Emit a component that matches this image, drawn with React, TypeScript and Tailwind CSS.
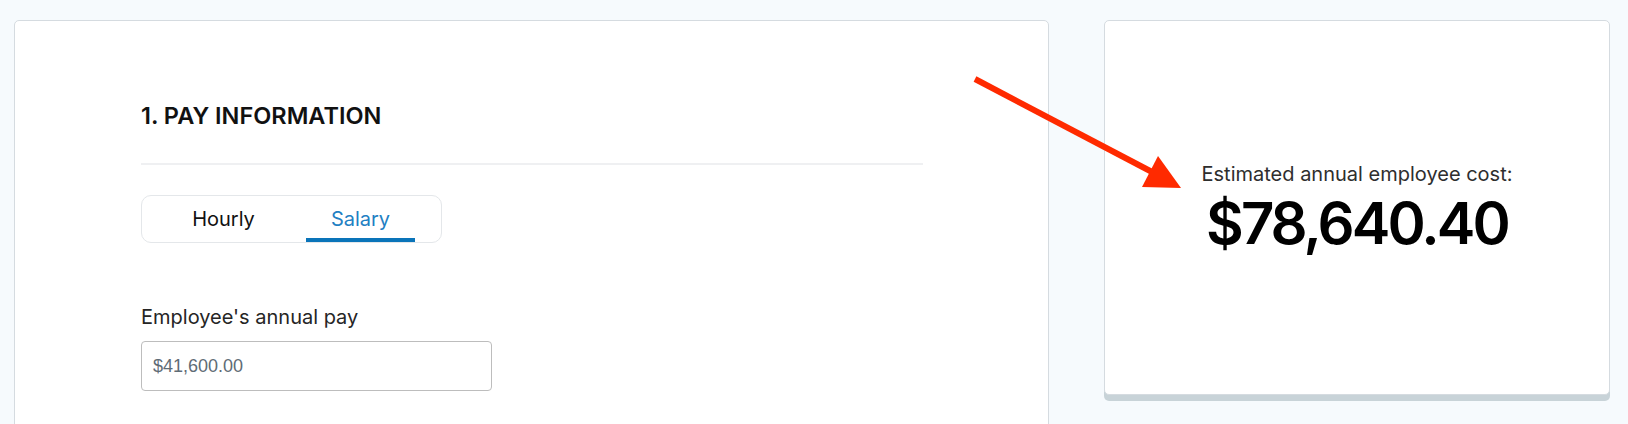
import React from 'react';

const font = { fontFamily: 'Inter, "Noto Sans", sans-serif' };

function PayToggle() {
    return (
        <div className="inline-flex h-[48px] items-stretch gap-[28px] rounded-[10px] border border-[#e4e7ea] bg-white pl-[27px] pr-[26px]">
            <div className="flex w-[109px] items-center justify-center border-b-4 border-transparent pt-1 text-[20px] text-[#111]">
                Hourly
            </div>
            <div className="flex w-[109px] items-center justify-center border-b-4 border-[#0a74b9] pt-1 text-[20px] text-[#1f80c3]">
                Salary
            </div>
        </div>
    );
}

export default function App() {
    return (
        <div className="relative min-h-screen overflow-hidden bg-[#f6fafd]" style={font}>
            <div className="flex items-start gap-[55px] pl-[14px] pt-5">
                {/* Pay information card */}
                <section className="h-[440px] w-[1035px] shrink-0 rounded-[5px] border border-[#d5dbe0] bg-white pl-[126px] pt-[80px]">
                    <h2 className="text-[23.5px] font-semibold leading-[30px] text-[#111]">1. PAY INFORMATION</h2>
                    <div className="mt-[32px] w-[782px] border-t-2 border-[#eff0f2]" />
                    <div className="mt-[30px]">
                        <PayToggle />
                    </div>
                    <label className="mt-[62px] block text-[20px] leading-[24px] text-[#252525]">
                        Employee's annual pay
                    </label>
                    <div
                        className="mt-[12px] flex h-[50px] w-[351px] items-center rounded-[4px] border border-[#bdbdbd] pl-[11px] text-[18px] text-[#5f6c76]"
                        style={{ fontFamily: '"Liberation Sans", Arial, sans-serif' }}
                    >
                        $41,600.00
                    </div>
                </section>

                {/* Result card */}
                <section className="flex h-[375px] w-[506px] shrink-0 flex-col items-center justify-center rounded-[5px] border border-[#d5dbe0] bg-white shadow-[0_6px_0_#c8d3d8]">
                    <p className="text-[20px] leading-[23px] text-[#2e2e2e]">Estimated annual employee cost:</p>
                    <p className="mt-[8px] text-[58px] font-semibold leading-[58px] tracking-[-0.05em] text-black">$78,640.40</p>
                </section>
            </div>

            {/* annotation arrow */}
            <svg className="pointer-events-none absolute left-0 top-0" width="1628" height="424">
                <line x1="975" y1="79" x2="1154" y2="173" stroke="#ff2a00" strokeWidth="6" />
                <polygon points="1181,188 1158,156 1142,187" fill="#ff2a00" />
            </svg>
        </div>
    );
}
